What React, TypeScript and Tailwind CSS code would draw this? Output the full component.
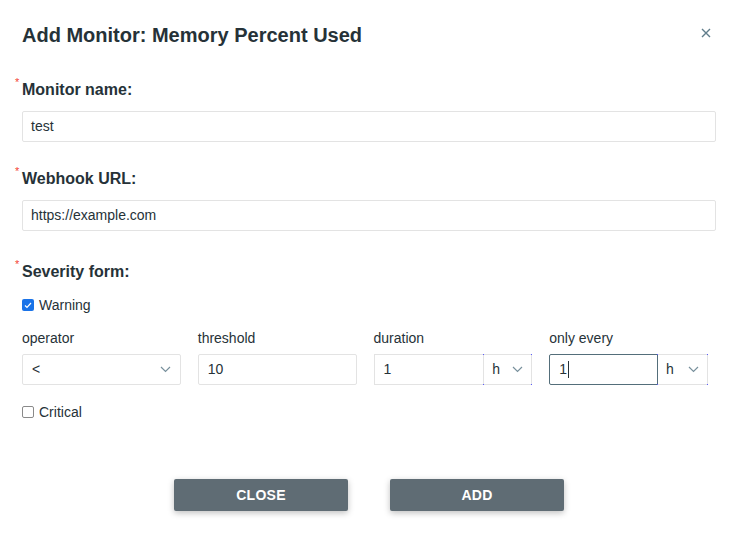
import React from "react";

const font = { fontFamily: '"Liberation Sans", Arial, Helvetica, sans-serif' };

function Chevron() {
  return (
    <svg width="11" height="7" viewBox="0 0 11 7" className="shrink-0">
      <path d="M1 1 L5.5 5.5 L10 1" fill="none" stroke="#78909c" strokeWidth="1.2" />
    </svg>
  );
}

function Label({ children }: { children: React.ReactNode }) {
  return (
    <div className="relative text-[16px] leading-[20px] font-bold text-[#263238]">
      <span className="absolute -left-[7px] -top-[3px] text-[11px] leading-[11px] text-[#f44336] font-normal">*</span>
      {children}
    </div>
  );
}

function Dots() {
  return (
    <>
      <span className="absolute -left-px -top-px w-px h-px bg-[#5b5bff]" />
      <span className="absolute -right-px -top-px w-px h-px bg-[#5b5bff]" />
      <span className="absolute -left-px -bottom-px w-px h-px bg-[#5b5bff]" />
      <span className="absolute -right-px -bottom-px w-px h-px bg-[#5b5bff]" />
    </>
  );
}

export default function App() {
  return (
    <div className="w-[739px] h-[535px] bg-white relative px-[22px] text-[#263238]" style={font}>
      <div className="pt-[23px] flex items-start justify-between">
        <div className="text-[20px] leading-[24px] font-bold text-[#263238]">Add Monitor: Memory Percent Used</div>
        <svg width="10" height="10" viewBox="0 0 10 10" className="mt-[5px] mr-[6px]">
          <path d="M1 1 L9 9 M9 1 L1 9" stroke="#607d8b" strokeWidth="1.4" />
        </svg>
      </div>

      <div className="mt-[33px]">
        <Label>Monitor name:</Label>
      </div>
      <div className="mt-[11px] h-[31px] w-[694px] border border-[#e3e3e3] rounded-[2px] flex items-center px-[8px] text-[14px] text-[#263238]">
        test
      </div>

      <div className="mt-[27px]">
        <Label>Webhook URL:</Label>
      </div>
      <div className="mt-[11px] h-[31px] w-[694px] border border-[#e3e3e3] rounded-[2px] flex items-center px-[8px] text-[14px] text-[#263238]">
        https://example.com
      </div>

      <div className="mt-[31px]">
        <Label>Severity form:</Label>
      </div>

      <div className="mt-[13px] flex items-center gap-[5px] text-[14px] leading-[20px] text-[#263238]">
        <span className="w-[12px] h-[12px] rounded-[2px] bg-[#1a73e8] flex items-center justify-center">
          <svg width="8" height="7" viewBox="0 0 8 7">
            <path d="M1 3.5 L3 5.5 L7 1" fill="none" stroke="white" strokeWidth="1.2" />
          </svg>
        </span>
        Warning
      </div>

      <div className="mt-[13px] grid grid-cols-4 gap-x-[17px] w-[686px]">
        <div className="text-[14px] leading-[20px] text-[#263238]">operator</div>
        <div className="text-[14px] leading-[20px] text-[#263238]">threshold</div>
        <div className="text-[14px] leading-[20px] text-[#263238]">duration</div>
        <div className="text-[14px] leading-[20px] text-[#263238]">only every</div>

        <div className="mt-[6px] h-[31px] border border-[#e3e3e3] rounded-[2px] flex items-center justify-between pl-[9px] pr-[9px] text-[14px]">
          <span>&lt;</span>
          <Chevron />
        </div>
        <div className="mt-[6px] h-[31px] border border-[#e3e3e3] rounded-[2px] flex items-center px-[9px] text-[14px]">
          10
        </div>
        <div className="mt-[6px] h-[31px] flex text-[14px]">
          <div className="flex-1 border border-[#e3e3e3] border-r-0 flex items-center px-[9px]">1</div>
          <div className="relative w-[49px] border border-[#e3e3e3] flex items-center justify-between pl-[8px] pr-[8px]">
            <span>h</span>
            <Chevron />
            <Dots />
          </div>
        </div>
        <div className="mt-[6px] h-[31px] flex text-[14px]">
          <div className="flex-1 border border-[#546e7a] rounded-l-[2px] flex items-center px-[9px]">
            1<span className="inline-block w-px h-[17px] bg-[#263238] ml-[1px]" />
          </div>
          <div className="relative w-[50px] border border-[#e3e3e3] border-l-0 flex items-center justify-between pl-[8px] pr-[8px]">
            <span>h</span>
            <Chevron />
            <Dots />
          </div>
        </div>
      </div>

      <div className="mt-[17px] flex items-center gap-[5px] text-[14px] leading-[20px] text-[#263238]">
        <span className="w-[12px] h-[12px] rounded-[2px] border border-[#8a8a8a] bg-white" />
        Critical
      </div>

      <div className="mt-[57px] flex gap-[42px] pl-[152px]">
        <button className="w-[174px] h-[32px] rounded-[2px] bg-[#5f6c74] text-white text-[14px] font-bold tracking-[0.3px] shadow-[0_2px_6px_rgba(0,0,0,0.25)]">
          CLOSE
        </button>
        <button className="w-[174px] h-[32px] rounded-[2px] bg-[#5f6c74] text-white text-[14px] font-bold tracking-[0.3px] shadow-[0_2px_6px_rgba(0,0,0,0.25)]">
          ADD
        </button>
      </div>
    </div>
  );
}
